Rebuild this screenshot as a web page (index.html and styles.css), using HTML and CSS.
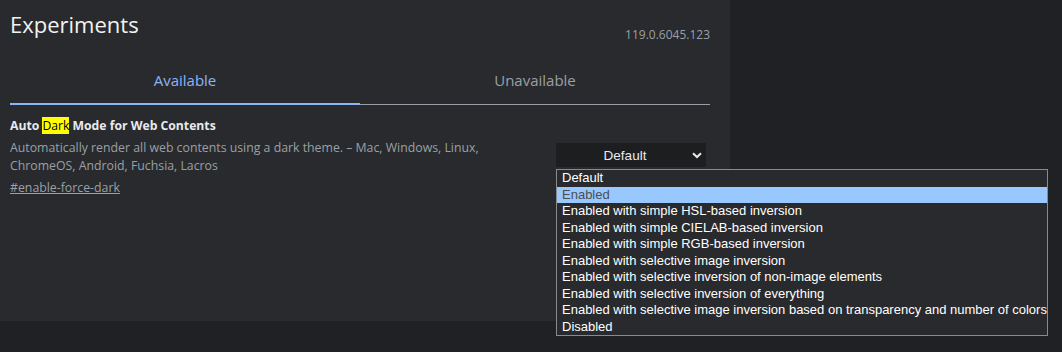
FILE: index.html
```html
<!DOCTYPE html>
<html>
<head>
<meta charset="utf-8">
<link rel="stylesheet" href="styles.css">
</head>
<body>
<div class="page">
  <div class="panel">
    <header class="head">
      <h1 class="title">Experiments</h1>
      <span class="version">119.0.6045.123</span>
    </header>
    <nav class="tabs">
      <div class="tab active">Available</div>
      <div class="tab">Unavailable</div>
    </nav>
    <section class="experiment">
      <div class="exp-text">
        <h2 class="exp-name">Auto <mark class="hl">Dark</mark> Mode for Web Contents</h2>
        <p class="exp-desc">Automatically render all web contents using a dark theme. – Mac, Windows, Linux, ChromeOS, Android, Fuchsia, Lacros</p>
        <a class="exp-link">#enable-force-dark</a>
      </div>
      <div class="exp-control">
        <div class="select">
          <span class="select-value">Default</span>
          <svg class="chev" width="10" height="7" viewBox="0 0 10 7"><path d="M1 1.2 L5 5 L9 1.2" fill="none" stroke="#e8eaed" stroke-width="2"/></svg>
        </div>
        <ul class="options">
          <li>Default</li>
          <li class="sel">Enabled</li>
          <li>Enabled with simple HSL-based inversion</li>
          <li>Enabled with simple CIELAB-based inversion</li>
          <li>Enabled with simple RGB-based inversion</li>
          <li>Enabled with selective image inversion</li>
          <li>Enabled with selective inversion of non-image elements</li>
          <li>Enabled with selective inversion of everything</li>
          <li>Enabled with selective image inversion based on transparency and number of colors</li>
          <li>Disabled</li>
        </ul>
      </div>
    </section>
  </div>
</div>
</body>
</html>
```

FILE: styles.css
```css
html, body {
  margin: 0;
  padding: 0;
  background: #202124;
  height: 100%;
  overflow: hidden;
}
body {
  font-family: "Open Sans", "Noto Sans", sans-serif;
  color: #e8eaed;
}
.page {
  display: flex;
}
.panel {
  width: 730px;
  height: 321px;
  background: #292a2d;
  padding: 0 20px 0 10px;
  box-sizing: border-box;
}
.head {
  display: flex;
  justify-content: space-between;
  align-items: flex-end;
  height: 42px;
}
.title {
  margin: 0;
  font-weight: 400;
  font-size: 22px;
  line-height: 30px;
  color: #f1f3f4;
  position: relative;
  top: -3px;
}
.version {
  font-size: 12px;
  color: #9aa0a6;
  line-height: 16px;
  position: relative;
  top: 1px;
}
.tabs {
  display: flex;
  margin-top: 28px;
}
.tab {
  flex: 1;
  text-align: center;
  font-size: 15px;
  line-height: 20px;
  padding-bottom: 14px;
  color: #9aa0a6;
  border-bottom: 1px solid #9aa0a6;
}
.tab.active {
  color: #8ab4f8;
  border-bottom: 2px solid #8ab4f8;
  padding-bottom: 13px;
}
.experiment {
  display: flex;
  justify-content: space-between;
  margin-top: 12px;
}
.exp-text {
  width: 490px;
}
.exp-name {
  margin: 0;
  font-size: 12.2px;
  font-weight: 700;
  line-height: 18px;
  color: #e8eaed;
}
.hl {
  background: #ffff00;
  color: #000;
  font-weight: 400;
}
.exp-desc {
  margin: 4px 0 0;
  font-size: 12.3px;
  line-height: 18px;
  color: #9aa0a6;
}
.exp-link {
  display: inline-block;
  margin-top: 4px;
  font-size: 12.3px;
  line-height: 18px;
  color: #9aa0a6;
  text-decoration: underline;
}
.exp-control {
  position: relative;
  width: 150px;
  margin-top: 26px;
  margin-right: 4px;
}
.select {
  height: 24px;
  background: #1d1e20;
  display: flex;
  align-items: center;
  justify-content: center;
  padding-right: 12px;
  box-sizing: border-box;
  position: relative;
  font-family: "Liberation Sans", Arial, sans-serif;
  font-size: 13.5px;
}
.chev {
  position: absolute;
  right: 4px;
  top: 9px;
}
.options {
  position: absolute;
  left: 0;
  top: 26px;
  margin: 0;
  padding: 0;
  list-style: none;
  width: 490px;
  background: #292a2d;
  border: 1px solid #8a8a8a;
  font-family: "Liberation Sans", Arial, sans-serif;
  font-size: 13px;
  color: #fff;
  z-index: 2;
}
.options li {
  height: 16.5px;
  line-height: 16px;
  padding-left: 5px;
  white-space: nowrap;
}
.options li.sel {
  background: #99c8ff;
  color: #4d4d4d;
}
```
